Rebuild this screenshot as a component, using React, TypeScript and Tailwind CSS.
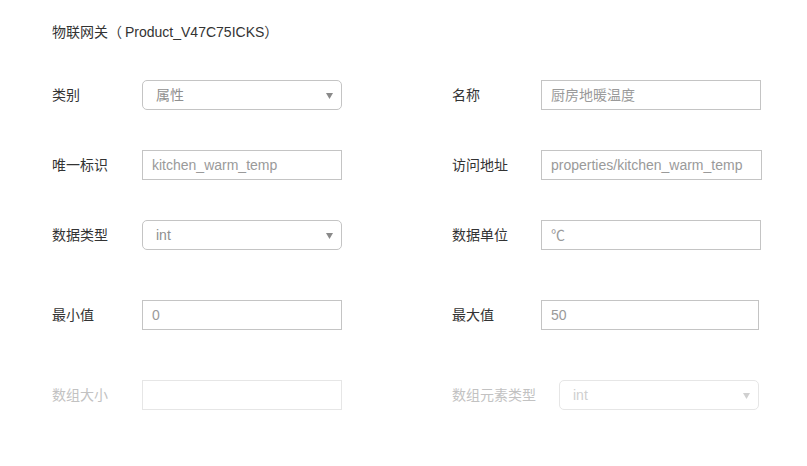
import React from 'react';

const font = { fontFamily: '"Liberation Sans", "Noto Sans CJK SC", sans-serif' };

function Arrow({ disabled }: { disabled?: boolean }) {
  return (
    <svg width="7" height="6" viewBox="0 0 7 6" className="absolute right-[8px] top-[12px]">
      <path d="M0 0 L7 0 L3.5 6 Z" fill={disabled ? '#d0d0d0' : '#8a8a8a'} />
    </svg>
  );
}

function Select({ value, disabled, width = 'w-[200px]' }: { value: string; disabled?: boolean; width?: string }) {
  return (
    <div
      className={`relative ${width} h-[30px] rounded-[5px] border bg-white pl-[13px] flex items-center text-sm ${
        disabled ? 'border-[#e6e6e6] text-[#cfcfcf]' : 'border-[#c4c4c4] text-[#8f8f8f]'
      }`}
    >
      {value}
      <Arrow disabled={disabled} />
    </div>
  );
}

function Input({ value, disabled, width = 'w-[200px]' }: { value: string; disabled?: boolean; width?: string }) {
  return (
    <div
      className={`${width} h-[30px] border bg-white pl-[9px] flex items-center text-sm ${
        disabled ? 'border-[#e6e6e6] text-[#cfcfcf]' : 'border-[#c4c4c4] text-[#9a9a9a]'
      }`}
    >
      {value}
    </div>
  );
}

function Field({
  label,
  disabled,
  labelWidth = 'w-[90px]',
  children,
}: {
  label: string;
  disabled?: boolean;
  labelWidth?: string;
  children: React.ReactNode;
}) {
  return (
    <div className="w-[400px] shrink-0 flex items-center">
      <div className={`${labelWidth} shrink-0 text-sm ${disabled ? 'text-[#c2c2c2]' : 'text-[#333]'}`}>{label}</div>
      {children}
    </div>
  );
}

export default function App() {
  return (
    <div className="w-[807px] h-[466px] overflow-hidden bg-white pl-[52px] pt-[22px]" style={font}>
      <div className="text-sm leading-5 text-[#333]">
        物联网关（<span className="ml-[3px]">Product_V47C75ICKS</span>）
      </div>

      <div className="mt-[38px] flex">
        <Field label="类别">
          <Select value="属性" />
        </Field>
        <Field label="名称" labelWidth="w-[89px]">
          <Input value="厨房地暖温度" width="w-[220px]" />
        </Field>
      </div>

      <div className="mt-[40px] flex">
        <Field label="唯一标识">
          <Input value="kitchen_warm_temp" />
        </Field>
        <Field label="访问地址" labelWidth="w-[89px]">
          <Input value="properties/kitchen_warm_temp" width="w-[221px]" />
        </Field>
      </div>

      <div className="mt-[40px] flex">
        <Field label="数据类型">
          <Select value="int" />
        </Field>
        <Field label="数据单位" labelWidth="w-[89px]">
          <Input value="℃" width="w-[220px]" />
        </Field>
      </div>

      <div className="mt-[50px] flex">
        <Field label="最小值">
          <Input value="0" />
        </Field>
        <Field label="最大值" labelWidth="w-[89px]">
          <Input value="50" width="w-[218px]" />
        </Field>
      </div>

      <div className="mt-[50px] flex">
        <Field label="数组大小" disabled>
          <Input value="" disabled />
        </Field>
        <Field label="数组元素类型" disabled labelWidth="w-[107px]">
          <Select value="int" disabled />
        </Field>
      </div>
    </div>
  );
}
